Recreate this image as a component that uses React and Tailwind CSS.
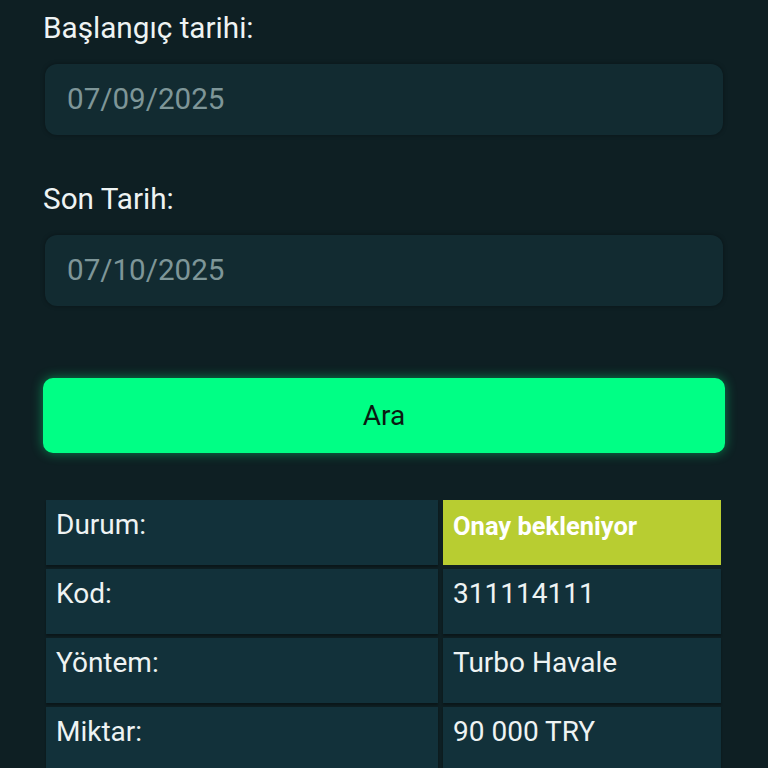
const rows = [
  { label: "Durum:", value: "Onay bekleniyor", status: true },
  { label: "Kod:", value: "311114111" },
  { label: "Yöntem:", value: "Turbo Havale" },
  { label: "Miktar:", value: "90 000 TRY" },
];

function DateField({ label, value }) {
  return (
    <div className="flex flex-col">
      <label className="text-[29.7px] leading-[34px] text-[#eef3f3]">{label}</label>
      <div className="mt-[19px] ml-[2px] mr-[2px] flex h-[71px] items-center rounded-[12px] bg-[#122b31] px-[22px] text-[29.6px] text-[#7e9698] shadow-[0_0_4px_rgba(0,0,0,0.35)]">
        {value}
      </div>
    </div>
  );
}

export default function App() {
  return (
    <div
      className="min-h-[768px] w-full overflow-hidden bg-[#0e1f23] px-[43px] pt-[11px]"
      style={{ fontFamily: "Roboto, 'Noto Sans', sans-serif" }}
    >
      <DateField label="Başlangıç tarihi:" value="07/09/2025" />
      <div className="mt-[47px]">
        <DateField label="Son Tarih:" value="07/10/2025" />
      </div>

      {/* Search button */}
      <button className="mt-[72px] flex h-[75px] w-full items-center justify-center rounded-[10px] bg-[#00ff85] text-[28px] text-[#0b1a12] shadow-[0_0_12px_rgba(0,255,133,0.45)]">
        Ara
      </button>

      {/* Result table */}
      <div className="mt-[47px] ml-[3px] mr-[4px] grid grid-cols-[392px_1fr] gap-x-[5px] gap-y-[4px]">
        {rows.map((r) => (
          <div key={r.label} className="contents">
            <div className="h-[65px] bg-[#12313a] px-[10px] pt-[10px] text-[28px] leading-[30px] text-[#eef3f3] shadow-[0_2px_2px_rgba(0,0,0,0.3)]">
              {r.label}
            </div>
            {r.status ? (
              <div className="h-[65px] bg-[#b8cd31] px-[10px] pt-[11px] text-[25.5px] font-bold leading-[30px] text-white">
                {r.value}
              </div>
            ) : (
              <div className="h-[65px] bg-[#12313a] px-[10px] pt-[10px] text-[28px] leading-[30px] text-[#eef3f3] shadow-[0_2px_2px_rgba(0,0,0,0.3)]">
                {r.value}
              </div>
            )}
          </div>
        ))}
      </div>
    </div>
  );
}
